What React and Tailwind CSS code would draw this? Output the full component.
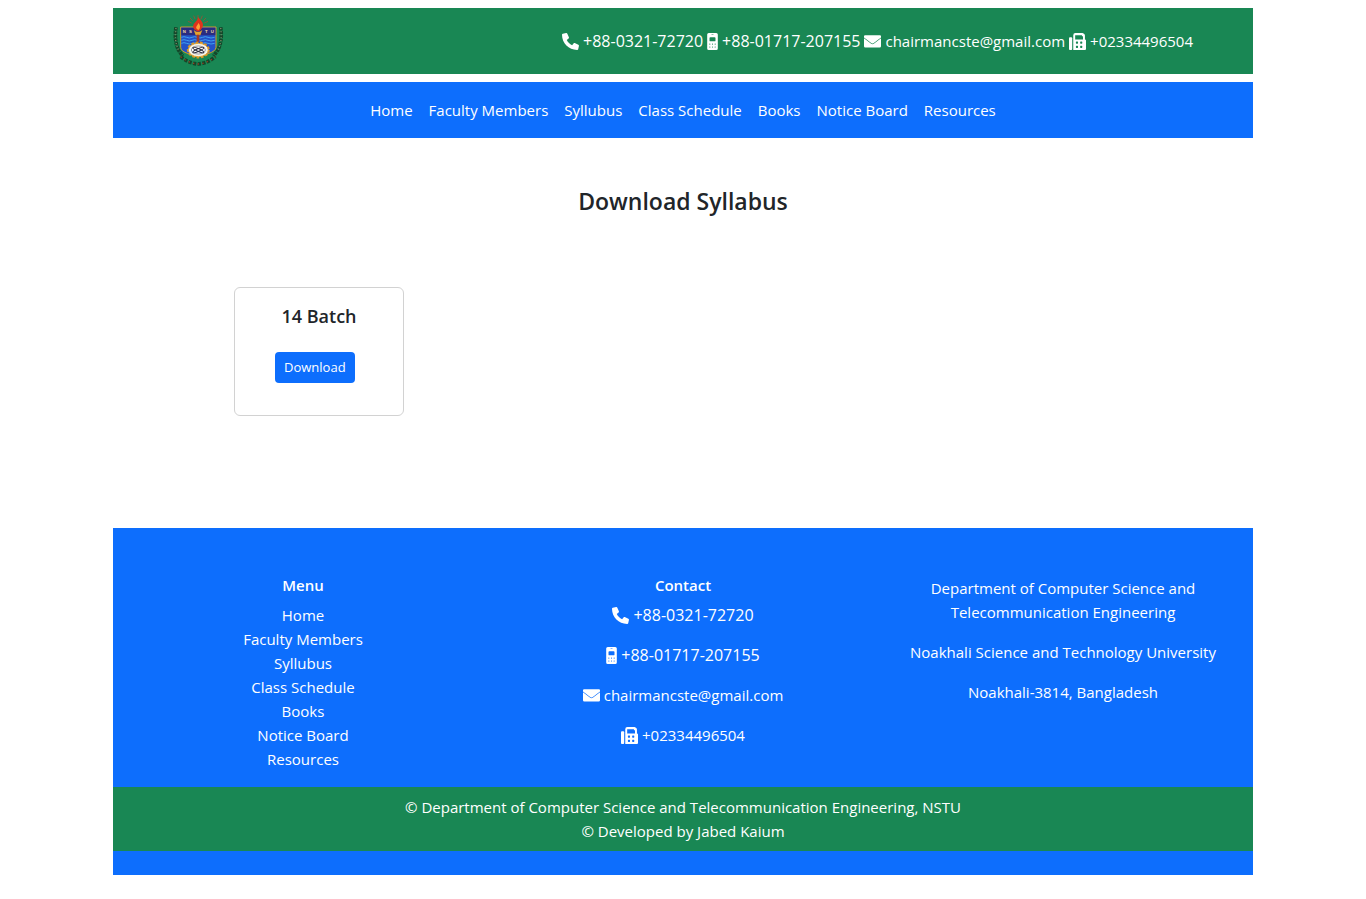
const links = [
  "Home",
  "Faculty Members",
  "Syllubus",
  "Class Schedule",
  "Books",
  "Notice Board",
  "Resources",
];

function PhoneIcon() {
  return (
    <svg viewBox="0 0 512 512" fill="currentColor" className="h-[17px] w-[17px] shrink-0" aria-hidden="true">
      <path d="M511.200 387l-23.250 100.800c-3.266 14.250-15.790 24.220-30.460 24.220C205.200 512 0 306.800 0 54.500c0-14.660 9.969-27.200 24.220-30.450l100.800-23.250C139.700-2.602 154.700 5.018 160.800 18.920l46.520 108.500c5.438 12.780 1.770 27.670-8.980 36.450L144.500 207.100c33.980 69.220 90.260 125.500 159.500 159.500l44.080-53.800c8.688-10.780 23.690-14.510 36.470-8.975l108.500 46.510C506.100 357.200 514.600 372.400 511.200 387z" />
    </svg>
  );
}

function MobileIcon() {
  return (
    <svg viewBox="0 0 320 512" fill="currentColor" fillRule="evenodd" className="h-[17px] w-[11px] shrink-0" aria-hidden="true">
      <path d="M48 0H272a48 48 0 0 1 48 48V464a48 48 0 0 1-48 48H48a48 48 0 0 1-48-48V48A48 48 0 0 1 48 0ZM136 42a8 8 0 0 0 0 16h48a8 8 0 0 0 0-16ZM96 128a26 26 0 0 0-26 26v70a26 26 0 0 0 26 26H224a26 26 0 0 0 26-26v-70a26 26 0 0 0-26-26ZM80 316a18 18 0 1 0 0 36a18 18 0 0 0 0-36ZM160 316a18 18 0 1 0 0 36a18 18 0 0 0 0-36ZM240 316a18 18 0 1 0 0 36a18 18 0 0 0 0-36ZM80 404a18 18 0 1 0 0 36a18 18 0 0 0 0-36ZM160 404a18 18 0 1 0 0 36a18 18 0 0 0 0-36ZM240 404a18 18 0 1 0 0 36a18 18 0 0 0 0-36Z" />
    </svg>
  );
}

function EnvelopeIcon() {
  return (
    <svg viewBox="0 0 512 512" fill="currentColor" className="h-[17px] w-[17px] shrink-0" aria-hidden="true">
      <path d="M32 64H480Q512 64 512 96V136L285 308Q256 330 227 308L0 136V96Q0 64 32 64Z" />
      <path d="M0 160L217 326Q256 354 295 326L512 160V400Q512 440 472 440H40Q0 440 0 400Z" />
    </svg>
  );
}

function FaxIcon() {
  return (
    <svg viewBox="0 0 512 512" fill="currentColor" fillRule="evenodd" className="h-[17px] w-[17px] shrink-0" aria-hidden="true">
      <path d="M28 128H68a28 28 0 0 1 28 28V484a28 28 0 0 1-28 28H28a28 28 0 0 1-28-28V156a28 28 0 0 1 28-28Z" />
      <path d="M192 0H402a64 64 0 0 1 45 19l14 14a64 64 0 0 1 19 45V192a32 32 0 0 1 32 32V480a32 32 0 0 1-32 32H128V64A64 64 0 0 1 192 0ZM186 64V192H422V96H390V64ZM224 256a16 16 0 0 0-16 16v32a16 16 0 0 0 16 16h32a16 16 0 0 0 16-16v-32a16 16 0 0 0-16-16ZM352 256a16 16 0 0 0-16 16v32a16 16 0 0 0 16 16h32a16 16 0 0 0 16-16v-32a16 16 0 0 0-16-16ZM224 384a16 16 0 0 0-16 16v32a16 16 0 0 0 16 16h32a16 16 0 0 0 16-16v-32a16 16 0 0 0-16-16ZM352 384a16 16 0 0 0-16 16v32a16 16 0 0 0 16 16h32a16 16 0 0 0 16-16v-32a16 16 0 0 0-16-16Z" />
    </svg>
  );
}

const contacts = [
  { Icon: PhoneIcon, text: "+88-0321-72720", href: "tel:+88032172720", textSize: "text-base" },
  { Icon: MobileIcon, text: "+88-01717-207155", href: "tel:+8801717207155", textSize: "text-base" },
  { Icon: EnvelopeIcon, text: "chairmancste@gmail.com", href: "mailto:chairmancste@gmail.com", textSize: "text-[15px]" },
  { Icon: FaxIcon, text: "+02334496504", href: "tel:+02334496504", textSize: "text-[15px]" },
];

function Logo() {
  return (
    <svg viewBox="15 15 156 156" className="h-[52px] w-[52px]" role="img" aria-label="NSTU">
      {/* lettering ring */}
      <g fill="none" stroke="#14472a" strokeWidth="11" strokeDasharray="9 2">
        <path d="M24 52Q18 94 32 121L44 138" />
        <path d="M158 52Q164 94 149 121L137 138" />
        <path d="M38 140Q62 160 90 162Q118 160 142 140" strokeDasharray="10 4" />
      </g>
      <g fill="none" stroke="#7e8a68" strokeWidth="4" strokeDasharray="3 6">
        <path d="M24 54Q18 94 32 121" />
        <path d="M158 54Q164 94 149 121" />
      </g>
      <path d="M38 140Q62 160 90 162Q118 160 142 140" fill="none" stroke="#9c3c22" strokeWidth="4" strokeDasharray="4 10" />
      {/* rays */}
      <path d="M90 13V24M77 17l4 10M103 17l-4 10M66 24l8 8M114 24l-8 8M60 34l11 5M120 34l-11 5" stroke="#b8452c" strokeWidth="2" />
      {/* shield */}
      <path d="M38 51H144V112Q143 124 120 131L91 141L61 131Q38 124 38 112Z" fill="#2452c8" stroke="#d49a24" strokeWidth="3" />
      <path d="M40 53H142V76H40Z" fill="#2a2c80" />
      <g fill="none" stroke="#3f9ff0" strokeWidth="3">
        <path d="M40 82q8-4 16 0t16 0t16 0t16 0t16 0t20 0" />
        <path d="M40 91q8-4 16 0t16 0t16 0t16 0t16 0t20 0" />
        <path d="M40 100q8-4 16 0t16 0t16 0t16 0t16 0t20 0" />
      </g>
      <g fill="#f0d8a8" fontFamily="Liberation Sans, sans-serif" fontSize="13" fontWeight="700" textAnchor="middle">
        <text x="49" y="69">N</text>
        <text x="67" y="69">S</text>
        <text x="115" y="69">T</text>
        <text x="133" y="69">U</text>
      </g>
      {/* torch */}
      <path d="M90 21C101 33 110 42 102 54Q98 63 90 65Q76 60 75 49Q75 42 83 35Q89 30 90 21Z" fill="#df321d" />
      <path d="M91 39Q101 50 92 60Q81 56 86 48Q90 44 91 39Z" fill="#ff9e38" />
      <path d="M77 60Q90 72 103 60L97 76H83Z" fill="#e4a32c" />
      <path d="M86 74H94V96H86Z" fill="#a33a27" />
      {/* gear and atom */}
      <ellipse cx="91" cy="120" rx="31" ry="22" fill="none" stroke="#d69527" strokeWidth="7" strokeDasharray="8 5" />
      <ellipse cx="91" cy="120" rx="30" ry="20" fill="#f7f5ed" stroke="#e1a534" strokeWidth="3" />
      <ellipse cx="91" cy="120" rx="21" ry="12" fill="#fff" stroke="#65636e" strokeWidth="2" />
      <g fill="none" stroke="#292938" strokeWidth="3">
        <ellipse cx="91" cy="120" rx="18" ry="4" transform="rotate(25 91 120)" />
        <ellipse cx="91" cy="120" rx="18" ry="4" transform="rotate(-25 91 120)" />
      </g>
    </svg>
  );
}

function ContactLink({ item }) {
  const { Icon, text, href, textSize } = item;
  return (
    <a href={href} className="flex items-center gap-1 whitespace-nowrap">
      <Icon />
      <span className={`leading-6 ${textSize}`}>{text}</span>
    </a>
  );
}

export default function App() {
  return (
    <div className="mx-auto max-w-[1140px] bg-white pt-2 pb-6 font-['Open_Sans',sans-serif] text-[15px] leading-6 text-[#212529]">
      <header className="flex flex-wrap items-center justify-between gap-4 bg-[#198754] px-[60px] py-[7px] text-white">
        <a href="#home">
          <Logo />
        </a>
        <div className="flex flex-wrap items-center gap-x-1">
          {contacts.map((item) => (
            <ContactLink key={item.text} item={item} />
          ))}
        </div>
      </header>

      <nav className="mt-2 flex flex-wrap justify-center gap-x-4 bg-[#0d6efd] px-4 py-4 text-white">
        {links.map((label) => (
          <a key={label} href="#">
            {label}
          </a>
        ))}
      </nav>

      <main className="px-[121px] pt-12 pb-28">
        <h1 className="text-center text-[23px] leading-[30px] font-semibold">Download Syllabus</h1>
        <div className="mt-[71px] flex flex-wrap gap-6">
          <section className="w-[170px] rounded-md border border-[#d2d2d2] px-10 pt-4 pb-8">
            <h2 className="text-center text-[18px] leading-6 font-semibold whitespace-nowrap">14 Batch</h2>
            <button
              type="button"
              className="mt-6 rounded bg-[#0d6efd] px-[9px] py-[5px] text-[13px] leading-[21px] text-white"
            >
              Download
            </button>
          </section>
        </div>
      </main>

      <footer className="bg-[#0d6efd] pt-12 pb-6 text-center text-white">
        <div className="grid grid-cols-1 pb-4 md:grid-cols-3">
          <div>
            <h3 className="mb-2 leading-[19px] font-semibold">Menu</h3>
            <ul>
              {links.map((label) => (
                <li key={label}>
                  <a href="#">{label}</a>
                </li>
              ))}
            </ul>
          </div>
          <div>
            <h3 className="mb-2 leading-[19px] font-semibold">Contact</h3>
            <div className="flex flex-col items-center gap-4">
              {contacts.map((item) => (
                <ContactLink key={item.text} item={item} />
              ))}
            </div>
          </div>
          <address className="flex flex-col gap-4 px-3 not-italic">
            <p>
              Department of Computer Science and
              <br />
              Telecommunication Engineering
            </p>
            <p>Noakhali Science and Technology University</p>
            <p>Noakhali-3814, Bangladesh</p>
          </address>
        </div>
        <div className="bg-[#198754] py-2">
          <p>© Department of Computer Science and Telecommunication Engineering, NSTU</p>
          <p>© Developed by Jabed Kaium</p>
        </div>
      </footer>
    </div>
  );
}
